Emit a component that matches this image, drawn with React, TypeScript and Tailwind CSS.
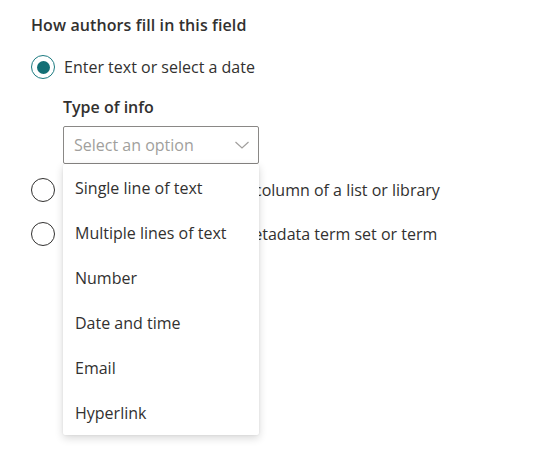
import React from "react";

const options = [
  "Single line of text",
  "Multiple lines of text",
  "Number",
  "Date and time",
  "Email",
  "Hyperlink",
];

const Radio: React.FC<{ checked?: boolean; label: string }> = ({ checked, label }) => {
  return (
    <div className="flex items-center gap-[9px] h-6">
      <span
        className={
          checked
            ? "w-6 h-6 rounded-full border border-[#1b7a80] flex items-center justify-center shrink-0"
            : "w-6 h-6 rounded-full border border-[#323130] shrink-0"
        }
      >
        {checked && <span className="w-[13px] h-[13px] rounded-full bg-[#136f75]" />}
      </span>
      <span className="text-[16px] leading-6 text-[#323130] whitespace-nowrap">{label}</span>
    </div>
  );
};

export default function App() {
  return (
    <div
      className="w-[535px] h-[460px] bg-white pl-[31px] pt-[15px]"
      style={{ fontFamily: '"Open Sans", "Noto Sans", sans-serif' }}
    >
      <div className="text-[16px] leading-5 font-semibold text-[#323130] tracking-[0.1px]">How authors fill in this field</div>

      <div className="mt-[20px]">
        <Radio checked label="Enter text or select a date" />
      </div>

      <div className="pl-8">
        <div className="mt-[18px] text-[16px] leading-5 font-semibold text-[#323130]">Type of info</div>
        <div className="relative mt-[9px] w-[196px] z-10">
          <div className="h-[38px] border border-[#8a8886] rounded-[2px] flex items-center justify-between pl-[10px] pr-[8px]">
            <span className="text-[16px] text-[#a19f9d]">Select an option</span>
            <svg width="16" height="10" viewBox="0 0 16 10" fill="none">
              <path d="M1.5 2 L8 8 L14.5 2" stroke="#a19f9d" strokeWidth="1.2" />
            </svg>
          </div>
          <div className="absolute left-0 top-full w-[196px] bg-white rounded-[2px] shadow-[0_3px_8px_rgba(0,0,0,0.16),0_0_2px_rgba(0,0,0,0.08)] pt-[1px]">
            {options.map((o) => (
              <div key={o} className="h-[45px] flex items-center pl-[12px] text-[16px] text-[#323130]">
                {o}
              </div>
            ))}
          </div>
        </div>
      </div>

      <div className="mt-[14px]">
        <Radio label="Look up a value from the column of a list or library" />
      </div>
      <div className="mt-[20px]">
        <Radio label="Choose from managed metadata term set or term" />
      </div>
    </div>
  );
}
